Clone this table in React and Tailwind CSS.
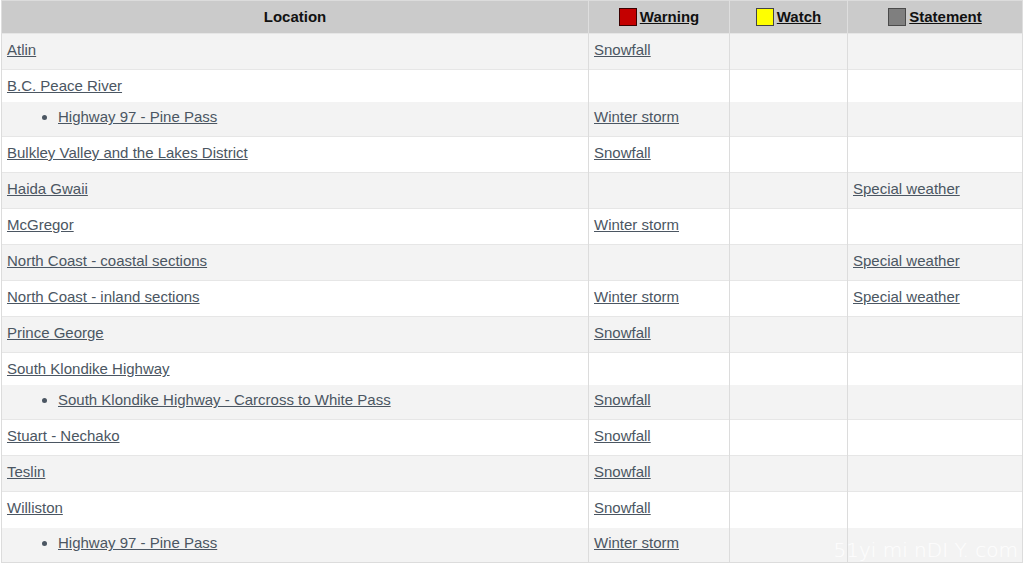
const ROWS = [
  { loc: 'Atlin', warning: 'Snowfall' },
  { loc: 'B.C. Peace River', parent: true },
  { loc: 'Highway 97 - Pine Pass', sub: true, warning: 'Winter storm' },
  { loc: 'Bulkley Valley and the Lakes District', warning: 'Snowfall' },
  { loc: 'Haida Gwaii', statement: 'Special weather' },
  { loc: 'McGregor', warning: 'Winter storm' },
  { loc: 'North Coast - coastal sections', statement: 'Special weather' },
  { loc: 'North Coast - inland sections', warning: 'Winter storm', statement: 'Special weather' },
  { loc: 'Prince George', warning: 'Snowfall' },
  { loc: 'South Klondike Highway', parent: true },
  { loc: 'South Klondike Highway - Carcross to White Pass', sub: true, warning: 'Snowfall' },
  { loc: 'Stuart - Nechako', warning: 'Snowfall' },
  { loc: 'Teslin', warning: 'Snowfall' },
  { loc: 'Williston', warning: 'Snowfall' },
  { loc: 'Highway 97 - Pine Pass', sub: true, warning: 'Winter storm' },
]

function Legend({ swatch, label }) {
  return (
    <span className="inline-flex items-center gap-[3px]">
      <span className={`inline-block w-[18px] h-[18px] border ${swatch}`} />
      <a href="#" className="underline text-[#111]">{label}</a>
    </span>
  )
}

function Cell({ text, pad }) {
  return (
    <td className={`px-[5px] ${pad} border-x border-[#dcdcdc] align-middle`}>
      {text && <a href="#" className="underline text-[#4b5662]">{text}</a>}
    </td>
  )
}

export default function App() {
  return (
    <div className="relative w-[1024px] h-[563px] overflow-hidden bg-white font-['Liberation_Sans',Arial,sans-serif] text-[15px] leading-[18px]">
      <table className="ml-px w-[1021px] table-fixed border-collapse border border-[#dcdcdc]">
        <colgroup>
          <col className="w-[587px]" />
          <col className="w-[141px]" />
          <col className="w-[118px]" />
          <col className="w-[175px]" />
        </colgroup>
        <thead>
          <tr className="h-[33px] bg-[#cbcbcb] text-[#111] font-bold">
            <th className="border-x border-[#dedede] text-center">Location</th>
            <th className="pt-[3px] border-x border-[#dedede] text-center">
              <Legend swatch="bg-[#c40000] border-[#3a0000]" label="Warning" />
            </th>
            <th className="pt-[3px] border-x border-[#dedede] text-center">
              <Legend swatch="bg-[#ffff00] border-[#444]" label="Watch" />
            </th>
            <th className="pt-[3px] border-x border-[#dedede] text-center">
              <Legend swatch="bg-[#7f7f7f] border-[#4a4a4a]" label="Statement" />
            </th>
          </tr>
        </thead>
        <tbody>
          {ROWS.map((r, i) => {
            const bg = i % 2 === 0 ? 'bg-[#f3f3f3]' : 'bg-white'
            const h = r.sub ? 'h-[35px]' : r.parent ? 'h-[32px]' : 'h-[36px]'
            const top = r.sub ? '' : 'border-t border-[#e6e6e6]'
            const pad = r.parent ? 'pt-[1px]' : 'pb-[3px]'
            return (
              <tr key={i} className={`${bg} ${h} ${top}`}>
                <td className={`px-[5px] ${pad} border-x border-[#dcdcdc] align-middle`}>
                  {r.sub ? (
                    <ul className="list-disc pl-[51px] text-[#4b5662]">
                      <li>
                        <a href="#" className="underline">{r.loc}</a>
                      </li>
                    </ul>
                  ) : (
                    <a href="#" className="underline text-[#4b5662]">{r.loc}</a>
                  )}
                </td>
                <Cell text={r.warning} pad={pad} />
                <Cell text={r.watch} pad={pad} />
                <Cell text={r.statement} pad={pad} />
              </tr>
            )
          })}
        </tbody>
      </table>

      {/* watermark */}
      <div className="absolute right-[6px] bottom-[4px] text-[20px] text-white/85 font-['DejaVu_Sans',sans-serif] font-light">
        51yi mi nDI Y. com
      </div>
    </div>
  )
}
